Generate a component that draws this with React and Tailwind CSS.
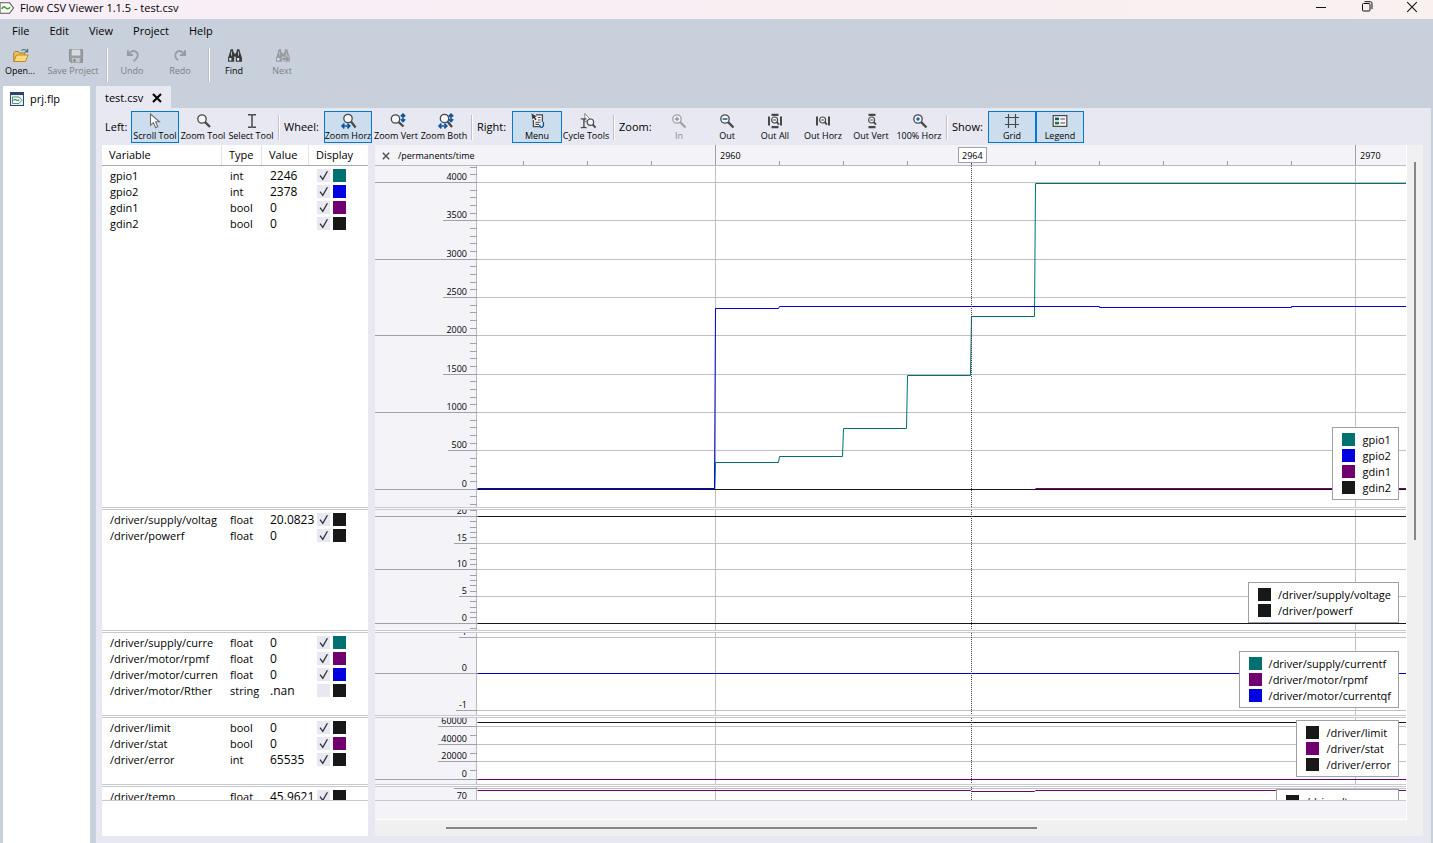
import React from "react";

const TEAL = "#007070";
const BLUE = "#0000e0";
const PURPLE = "#700070";
const BLACK = "#181818";

const PANES = [
  {
    name: "gpio",
    size: "h-[341px]",
    height: 341,
    rows: [
      ["gpio1", "int", "2246", true, TEAL],
      ["gpio2", "int", "2378", true, BLUE],
      ["gdin1", "bool", "0", true, PURPLE],
      ["gdin2", "bool", "0", true, BLACK],
    ],
    legend: [["gpio1", TEAL], ["gpio2", BLUE], ["gdin1", PURPLE], ["gdin2", BLACK]],
    axis: { zero: 323.3, unit: 0.07673, minor: 100, from: -200, to: 4200 },
    majors: [[4000, 0], [3500, 68], [3000, 0], [2500, 68], [2000, 0], [1500, 68], [1000, 0], [500, 73], [0, 0]],
    lines: [
      { color: TEAL, points: "102,323 339,323 340,296 403,296 404,290 467,290 468,262 531,262 532,209 595,209 596,150 659,150 660,17 4000,17" },
      { color: BLUE, points: "102,322 339,322 340,142 403,142 404,140 724,140 724,141 916,141 916,140 4000,140" },
      { color: PURPLE, points: "660,322 4000,322" },
      { color: BLACK, points: "102,323 4000,323" },
    ],
  },
  {
    name: "supply voltage",
    size: "h-[120px]",
    height: 120,
    rows: [
      ["/driver/supply/voltag", "float", "20.0823", true, BLACK],
      ["/driver/powerf", "float", "0", true, BLACK],
    ],
    legend: [["/driver/supply/voltage", BLACK], ["/driver/powerf", BLACK]],
    axis: { zero: 113.3, unit: 5.35, minor: 1, from: -1, to: 21 },
    majors: [[20, 0], [15, 79], [10, 0], [5, 84], [0, 0]],
    lines: [
      { color: BLACK, points: "102,6 4000,6" },
      { color: BLACK, points: "102,113 4000,113" },
    ],
  },
  {
    name: "motor",
    size: "h-[82px]",
    height: 82,
    rows: [
      ["/driver/supply/curre", "float", "0", true, TEAL],
      ["/driver/motor/rpmf", "float", "0", true, PURPLE],
      ["/driver/motor/curren", "float", "0", true, BLUE],
      ["/driver/motor/Rther", "string", ".nan", false, BLACK],
    ],
    legend: [["/driver/supply/currentf", TEAL], ["/driver/motor/rpmf", PURPLE], ["/driver/motor/currentqf", BLUE]],
    axis: { zero: 40.8, unit: 36.6, minor: 1, from: 0, to: -1 },
    majors: [[1, 84], [0, 0], [-1, 81]],
    lines: [{ color: "#0000c8", points: "102,40 4000,40" }],
  },
  {
    name: "limits",
    size: "h-[66px]",
    height: 66,
    rows: [
      ["/driver/limit", "bool", "0", true, BLACK],
      ["/driver/stat", "bool", "0", true, PURPLE],
      ["/driver/error", "int", "65535", true, BLACK],
    ],
    legend: [["/driver/limit", BLACK], ["/driver/stat", PURPLE], ["/driver/error", BLACK]],
    axis: { zero: 61.5, unit: 0.000882, minor: 10000, from: 0, to: 70000 },
    majors: [[60000, 63], [40000, 63], [20000, 63], [0, 0]],
    lines: [
      { color: BLACK, points: "102,4 4000,4" },
      { color: PURPLE, points: "102,61 4000,61" },
    ],
  },
  {
    name: "temperature",
    size: "h-[13px]",
    height: 13,
    rows: [["/driver/temp", "float", "45.9621", true, BLACK]],
    legend: [["/driver/temp", BLACK]],
    axis: { zero: 14, unit: 13, minor: 1, from: 0, to: -1 },
    majors: [[1, 79]],
    extraLabel: "70",
    lines: [{ color: PURPLE, points: "102,3 595,3 596,4 659,4 660,3 4000,3" }],
  },
];

function Divider() {
  return <div className="h-[3px] shrink-0 border-y border-[#c8c8d0] bg-white" />;
}

/* ---------- icons ---------- */

function Icon({ children }) {
  return (
    <svg width="16" height="16" viewBox="0 0 16 16" fill="none" stroke="#484848" strokeWidth="1.4" className="shrink-0 overflow-visible">
      {children}
    </svg>
  );
}

const Logo = ({ size = 14 }) => (
  <svg width={size} height={size} viewBox="0 0 14 14" fill="none" className="shrink-0">
    <path d="M0 1.7H9.5L13.5 7L9.5 12.3H0Z" fill="#fff" stroke="#555" strokeWidth="1.1" />
    <path d="M1.8 8C2.8 5.4 4.2 5.4 5.6 6.8S8.6 8.4 10 6.2" stroke="#2fa81e" strokeWidth="1.5" />
  </svg>
);

const ProjectIcon = () => (
  <svg width="14" height="14" viewBox="0 0 14 14" fill="none" className="shrink-0">
    <rect x=".5" y=".5" width="13" height="13" fill="#e9f2f0" stroke="#2c4672" />
    <rect width="14" height="3" fill="#2c4672" />
    <path d="M2.5 5H9L12 8.2L9 11.5H2.5Z" fill="#fff" stroke="#4b7a86" strokeWidth=".9" />
    <path d="M3.4 8.6C4.4 7 5.4 7.2 6.4 8S8.4 9 9.4 7.6" stroke="#2fa81e" strokeWidth="1.2" />
  </svg>
);

const OpenIcon = () => (
  <Icon>
    <path d="M1.8 13.5V4.8L3 3.5H6.2L7.4 5H12.6V7" fill="#f0c45a" stroke="#a77b2a" strokeWidth="1" />
    <path d="M1.8 13.5L4.6 7H16.2L13.4 13.5Z" fill="#fbd878" stroke="#b98a30" strokeWidth="1" />
    <path d="M9.5 2.5C11.5 .8 13.8 1.2 15 3.2M15.6 .8V3.9H12.6" stroke="#4a6e8c" strokeWidth="1.1" />
  </Icon>
);

const SaveIcon = () => (
  <Icon>
    <g transform="translate(3 0)">
      <path d="M1.5 1.5H14.5V14.5H3L1.5 13Z" fill="#9a9da1" stroke="#8c8f94" strokeWidth="1" />
      <rect x="3.8" y="1.5" width="8.4" height="6" fill="#d6dade" stroke="none" />
      <rect x="4.2" y="10" width="7.6" height="4.5" fill="#c3c7cb" stroke="none" />
      <rect x="5.5" y="11" width="2" height="3" fill="#83868a" stroke="none" />
    </g>
  </Icon>
);

const UndoIcon = () => (
  <Icon>
    <g transform="translate(1 0)">
      <path d="M3 2.2V7H8" stroke="#999ca0" strokeWidth="2" />
      <path d="M3.4 6.6C6 3 9 2.4 11.3 4C14 6.2 13 10 8.6 13.2" stroke="#999ca0" strokeWidth="1.8" />
    </g>
  </Icon>
);

const RedoIcon = () => (
  <Icon>
    <path d="M13 2.2V7H8" stroke="#999ca0" strokeWidth="2" />
    <path d="M12.6 6.6C10 3 7 2.4 4.7 4C2 6.2 3 10 6 12.2" stroke="#999ca0" strokeWidth="1.8" />
  </Icon>
);

const Binoculars = ({ color }) => (
  <g fill={color} stroke="none">
    <path d="M4.6 1.2H7.2V3.2L8.2 5V13.8H2V10L3.8 4.6Z" />
    <path d="M13.4 1.2H10.8V3.2L9.8 5V13.8H16V10L14.2 4.6Z" />
    <rect x="7.8" y="5.6" width="2.4" height="3" />
    <rect x="3.2" y="10" width="2.2" height="2.6" fill="#e2e6ea" />
    <rect x="11" y="10" width="2.2" height="2.6" fill="#e2e6ea" />
    <rect x="5" y="3.6" width="1" height="4" fill="#b5babf" />
    <rect x="12" y="3.6" width="1" height="4" fill="#b5babf" />
  </g>
);

const FindIcon = () => (
  <Icon>
    <Binoculars color="#3c3c3c" />
  </Icon>
);

const NextIcon = () => (
  <Icon>
    <Binoculars color="#989b9f" />
    <path d="M8 9.4H12V6.8L16.6 11L12 15.2V12.6H8Z" fill="#96999d" stroke="#c8d1db" strokeWidth=".7" />
  </Icon>
);

const Lens = ({ cx = 6, cy = 6, r = 4.2, to = 14, color = "#484848" }) => (
  <g stroke={color}>
    <circle cx={cx} cy={cy} r={r} fill="#f4f6f8" strokeWidth="1.3" />
    <path d={`M${cx + r * 0.75} ${cy + r * 0.75}L${to} ${to}`} strokeWidth="2.3" />
  </g>
);

const PointerIcon = () => (
  <Icon>
    <path d="M3.5 1V12.2L6.4 9.6L8.6 14.8L10.8 13.8L8.6 8.8H12.4Z" fill="#fff" stroke="#6e6e6e" strokeWidth="1.1" />
  </Icon>
);
const ZoomIcon = () => (
  <Icon>
    <g transform="translate(1 0)">
      <Lens />
    </g>
  </Icon>
);
const TextIcon = () => (
  <Icon>
    <g transform="translate(1 0)">
      <path d="M4 1.7H7L8 2.6L9 1.7H12M8 2.4V13.6M4 14.3H7L8 13.4L9 14.3H12" strokeWidth="1.5" />
    </g>
  </Icon>
);
const HorzArrow = () => (
  <path d="M1 13H8.6M3.4 10.6L1 13L3.4 15.4M6.4 10.6L8.8 13L6.4 15.4" stroke="#0d559e" strokeWidth="1.6" />
);
const VertArrow = () => (
  <path d="M13 1.2V8.2M10.8 3.4L13 1.1L15.2 3.4M10.8 6.2L13 8.5L15.2 6.2" stroke="#0d559e" strokeWidth="1.6" />
);
const ZoomHorzIcon = () => (
  <Icon>
    <g transform="translate(1 0)">
      <Lens cx={7} cy={5.5} to={14.5} />
      <HorzArrow />
    </g>
  </Icon>
);
const ZoomVertIcon = () => (
  <Icon>
    <g transform="translate(2 0)">
      <Lens cx={5.5} cy={6} to={13.5} />
      <VertArrow />
    </g>
  </Icon>
);
const ZoomBothIcon = () => (
  <Icon>
    <g transform="translate(2 0)">
      <Lens cx={6.5} cy={5.5} to={14} />
      <HorzArrow />
      <VertArrow />
    </g>
  </Icon>
);
const MenuIcon = () => (
  <Icon>
    <g transform="translate(1 0)">
      <path d="M3.4 1.8H12.4V13.6H3.4Z" fill="#f6f7f9" stroke="none" />
      <path d="M6 1.8H12.4V9M3.4 7V13.6H9.5" strokeWidth="1.3" />
      <path d="M1.5 .5L7 3.4L4.9 4L6.6 6.4L5.2 7.2L3.7 4.9L2.4 6.4Z" fill="#383838" stroke="none" />
      <path d="M8 4.5H10.6M8 7H10.6M5.4 9.3H10.6M5.4 11.4H9" strokeWidth="1.1" />
      <path d="M9.8 11.8V13.4L11 14.4H12L13.4 13V9" stroke="#0d559e" strokeWidth="1.4" />
    </g>
  </Icon>
);
const CycleIcon = () => (
  <Icon>
    <g transform="translate(2 0)">
      <path d="M4.8 .5V9L7 7.6H11.2Z" fill="#fff" stroke="#777" strokeWidth=".9" />
      <path d="M.8 5.8H3L4 6.6L5 5.8H6.6M3.9 6.4V14M.8 14.6H3L4 13.8L5 14.6H6.6" strokeWidth="1.3" />
      <circle cx="10.4" cy="9.2" r="3.2" fill="#f4f6f8" strokeWidth="1.2" />
      <path d="M12.8 11.6L15.6 14.6" strokeWidth="2" />
    </g>
  </Icon>
);
const ZoomInIcon = () => (
  <Icon>
    <Lens color="#a2a2a6" to={14.5} />
    <path d="M3.8 6H8.2M6 3.8V8.2" stroke="#96969a" />
  </Icon>
);
const ZoomOutIcon = () => (
  <Icon>
    <Lens to={14.5} />
    <path d="M3.6 6H8.4" stroke="#0d559e" strokeWidth="1.5" />
  </Icon>
);
const SmallLens = () => (
  <g>
    <circle cx="7.6" cy="7" r="3" fill="#f4f6f8" strokeWidth="1.2" />
    <path d="M6.3 7H8.9" strokeWidth="1.1" />
    <path d="M9.8 9.2L12 11.6" strokeWidth="1.8" />
  </g>
);
const HBars = () => <path d="M2 3.5V12.5M14 3.5V12.5" strokeWidth="2" />;
const VBars = () => <path d="M4.5 1.8H11.5M4.5 14.2H11.5" strokeWidth="2.2" />;
const OutAllIcon = () => (
  <Icon>
    <HBars />
    <VBars />
    <SmallLens />
  </Icon>
);
const OutHorzIcon = () => (
  <Icon>
    <HBars />
    <SmallLens />
  </Icon>
);
const OutVertIcon = () => (
  <Icon>
    <g transform="translate(1 0)">
      <VBars />
      <SmallLens />
    </g>
  </Icon>
);
const HundredIcon = () => (
  <Icon>
    <g transform="translate(1 0)">
      <Lens to={14.5} />
      <circle cx="6" cy="6" r="1.7" fill="#0d66b8" stroke="none" />
    </g>
  </Icon>
);
const GridIcon = () => (
  <Icon>
    <path d="M4.5 1V15M11.5 1V15M1 4.5H15M1 11.5H15" strokeWidth="1.2" />
  </Icon>
);
const LegendIcon = () => (
  <Icon>
    <rect x="1.2" y="2.6" width="13.6" height="10.8" fill="#f8f8f8" strokeWidth="1.2" />
    <rect x="3" y="4.6" width="4" height="2.6" fill="#174f80" stroke="none" />
    <rect x="3" y="8.8" width="4" height="2.6" fill="#197a30" stroke="none" />
    <path d="M8.4 6H13M8.4 10H13" strokeWidth="1.2" />
  </Icon>
);

const CloseMark = ({ size, width, color }) => (
  <svg width={size} height={size} viewBox="0 0 10 10" stroke={color} strokeWidth={width} fill="none">
    <path d="M1 1L9 9M9 1L1 9" />
  </svg>
);

/* ---------- bars ---------- */

function TitleBar() {
  return (
    <header className="flex h-[19px] shrink-0 items-start justify-between bg-linear-to-r from-[#f8eef7] to-[#f9f0f0]">
      <div className="flex items-center gap-[6px] leading-[15px]">
        <Logo />
        <h1 className="text-[11px]">Flow CSV Viewer 1.1.5 - test.csv</h1>
      </div>
      <div className="flex h-[13px]">
        <button aria-label="Minimize" className="flex w-[46px] items-center justify-center">
          <svg width="10" height="10" stroke="#111" fill="none"><path d="M0 5.5H10" /></svg>
        </button>
        <button aria-label="Restore" className="flex w-[46px] items-center justify-center">
          <svg width="11" height="11" stroke="#111" fill="none">
            <rect x=".5" y="2.5" width="7.5" height="7.5" rx="1" />
            <path d="M2.5 .7H8.3Q10 .7 10 2.4V8" />
          </svg>
        </button>
        <button aria-label="Close" className="flex w-[43px] items-center justify-center">
          <CloseMark size={12} width={0.9} color="#111" />
        </button>
      </div>
    </header>
  );
}

function MenuBar() {
  return (
    <nav className="flex h-[24px] shrink-0 items-center gap-[20px] px-3 text-[11px]">
      {["File", "Edit", "View", "Project", "Help"].map((m) => (
        <button key={m}>{m}</button>
      ))}
    </nav>
  );
}

function MainButton({ icon, label, width, disabled }) {
  return (
    <button disabled={disabled} className={`flex flex-col items-center ${width} ${disabled ? "text-[#7c8085]" : "text-black"}`}>
      {icon}
      <span className="text-[9px] leading-[14px] whitespace-nowrap">{label}</span>
    </button>
  );
}

function MainToolbar() {
  return (
    <div role="toolbar" className="flex h-[43px] shrink-0 items-start pt-[5px]">
      <MainButton icon={<OpenIcon />} label="Open..." width="w-[40px]" />
      <MainButton icon={<SaveIcon />} label="Save Project" width="w-[66px]" disabled />
      <span className="h-[34px] w-[2px] border-r border-white bg-[#b9c1ca]" />
      <MainButton icon={<UndoIcon />} label="Undo" width="w-[48px]" disabled />
      <MainButton icon={<RedoIcon />} label="Redo" width="w-[48px]" disabled />
      <span className="ml-[4px] h-[34px] w-[2px] border-r border-white bg-[#b9c1ca]" />
      <MainButton icon={<FindIcon />} label="Find" width="w-[48px]" />
      <MainButton icon={<NextIcon />} label="Next" width="w-[48px]" disabled />
    </div>
  );
}

function Tool({ icon, label, active, disabled, width = "w-[48px]" }) {
  return (
    <button
      disabled={disabled}
      className={`flex h-[32px] flex-col items-center border pt-px ${width} ${
        active ? "border-[#0078d7] bg-[#ccdeee]" : "border-transparent"
      } ${disabled ? "text-[#8a8a90]" : "text-black"}`}
    >
      {icon}
      <span className="text-[9px] leading-[14px] whitespace-nowrap">{label}</span>
    </button>
  );
}

function ToolGroup({ title, titleWidth, children }) {
  return (
    <div className="flex items-center">
      <span className={`text-[11px] whitespace-nowrap ${titleWidth}`}>{title}</span>
      {children}
    </div>
  );
}

const ToolSeparator = () => (
  <span className="mr-[4px] ml-[3px] h-[25px] w-[2px] self-center border-r border-white bg-[#c0c0c6]" />
);

function ChartToolbar() {
  return (
    <div role="toolbar" className="flex h-[37px] shrink-0 items-start pt-[3px] pb-[2px] pl-[9px]">
      <ToolGroup title="Left:" titleWidth="w-[26px]">
        <Tool icon={<PointerIcon />} label="Scroll Tool" active />
        <Tool icon={<ZoomIcon />} label="Zoom Tool" />
        <Tool icon={<TextIcon />} label="Select Tool" />
      </ToolGroup>
      <ToolSeparator />
      <ToolGroup title="Wheel:" titleWidth="w-[40px]">
        <Tool icon={<ZoomHorzIcon />} label="Zoom Horz" active />
        <Tool icon={<ZoomVertIcon />} label="Zoom Vert" />
        <Tool icon={<ZoomBothIcon />} label="Zoom Both" />
      </ToolGroup>
      <ToolSeparator />
      <ToolGroup title="Right:" titleWidth="w-[35px]">
        <Tool icon={<MenuIcon />} label="Menu" active width="w-[50px]" />
        <Tool icon={<CycleIcon />} label="Cycle Tools" />
      </ToolGroup>
      <ToolSeparator />
      <ToolGroup title="Zoom:" titleWidth="w-[36px]">
        <Tool icon={<ZoomInIcon />} label="In" disabled />
        <Tool icon={<ZoomOutIcon />} label="Out" />
        <Tool icon={<OutAllIcon />} label="Out All" />
        <Tool icon={<OutHorzIcon />} label="Out Horz" />
        <Tool icon={<OutVertIcon />} label="Out Vert" />
        <Tool icon={<HundredIcon />} label="100% Horz" />
      </ToolGroup>
      <ToolSeparator />
      <ToolGroup title="Show:" titleWidth="w-[36px]">
        <Tool icon={<GridIcon />} label="Grid" active />
        <Tool icon={<LegendIcon />} label="Legend" active />
      </ToolGroup>
    </div>
  );
}

/* ---------- variable list ---------- */

const Columns = () => (
  <colgroup>
    <col className="w-[120px]" />
    <col className="w-[40px]" />
    <col className="w-[47px]" />
    <col className="w-[59px]" />
  </colgroup>
);

function VariableRow({ row }) {
  const [name, type, value, shown, color] = row;
  return (
    <tr className="h-[16px] leading-[16px]">
      <td className="p-0 pl-2 whitespace-nowrap">{name}</td>
      <td className="p-0 pl-2 whitespace-nowrap">{type}</td>
      <td className="p-0 pl-2 text-[12px] leading-[16px] whitespace-nowrap">{value}</td>
      <td className="p-0 pl-2 align-top">
        <div className="flex items-center gap-[3px] pt-px">
          <label className="grid size-[13px]">
            <input
              type="checkbox"
              aria-label={`Display ${name}`}
              defaultChecked={shown}
              className="peer col-start-1 row-start-1 size-[13px] appearance-none bg-[#e7e8f1]"
            />
            <svg
              viewBox="0 0 13 13"
              fill="none"
              stroke="#2f3337"
              strokeWidth="1.3"
              className="pointer-events-none invisible col-start-1 row-start-1 size-[13px] peer-checked:visible"
            >
              <path d="M3 6.6L5.8 10.4L10.4 2.2" />
            </svg>
          </label>
          <span className="size-[13px]" style={{ backgroundColor: color }} />
        </div>
      </td>
    </tr>
  );
}

function VariableList() {
  return (
    <section className="flex w-[266px] shrink-0 flex-col bg-white text-[11px]">
      <div className="h-[21px] shrink-0 border-b border-[#a8a8b0]">
        <table className="h-[20px] w-full table-fixed border-separate border-spacing-0">
          <Columns />
          <thead>
            <tr className="text-left">
              <th className="border-r border-[#e2e2ea] p-0 pl-[7px] font-normal">Variable</th>
              <th className="border-r border-[#e2e2ea] p-0 pl-[7px] font-normal">Type</th>
              <th className="border-r border-[#e2e2ea] p-0 pl-[7px] font-normal">Value</th>
              <th className="p-0 pl-[7px] font-normal">Display</th>
            </tr>
          </thead>
        </table>
      </div>
      {PANES.map((pane, i) => (
        <React.Fragment key={pane.name}>
          {i > 0 && <Divider />}
          <div className={`shrink-0 overflow-hidden pt-[2px] ${pane.size}`}>
            <table className="w-full table-fixed border-collapse" aria-label={pane.name}>
              <Columns />
              <tbody>
                {pane.rows.map((row) => (
                  <VariableRow key={row[0]} row={row} />
                ))}
              </tbody>
            </table>
          </div>
        </React.Fragment>
      ))}
      <div className="h-px bg-[#c8c8d0]" />
    </section>
  );
}

/* ---------- chart ---------- */

const X_FIRST = 340;
const X_CURSOR = 596;
const X_UNIT = 64;

function TimeHeader() {
  const ticks = [];
  for (let n = -3; n < 40; n++) if (n % 10 !== 0 && n !== 4) ticks.push(X_FIRST + n * X_UNIT);
  return (
    <div className="relative h-[21px] shrink-0 overflow-hidden border-b border-[#b8b8be] bg-[#f3f3f8] text-[9px]">
      <svg width="100%" height="20" className="block">
        {ticks.map((x) => (
          <rect key={x} x={x} y="16" width="1" height="4" fill="#a0a0a8" />
        ))}
        {[0, 1, 2].map((n) => (
          <g key={n}>
            <rect x={X_FIRST + n * 640} y="0" width="1" height="20" fill="#a0a0a8" />
            <text x={X_FIRST + 5 + n * 640} y="14">{2960 + n * 10}</text>
          </g>
        ))}
        <rect x={X_CURSOR} y="17" width="1" height="4" fill="#555" />
        <rect x="583.5" y="2.5" width="28" height="15" fill="#fff" stroke="#a0a0a8" />
        <text x="587" y="14">2964</text>
        <text x="23" y="14">/permanents/time</text>
      </svg>
      <button aria-label="Close chart" className="absolute top-[7px] left-[7px]">
        <CloseMark size={8} width={1.9} color="#555" />
      </button>
    </div>
  );
}

function Plot({ pane }) {
  const { zero, unit, minor, from, to } = pane.axis;
  const y = (v) => Math.floor(zero - v * unit);
  const ticks = [];
  for (let v = from; v <= to; v += minor) ticks.push(y(v));
  return (
    <div className={`relative shrink-0 overflow-hidden bg-white ${pane.size}`}>
      <svg width="100%" height={pane.height} className="block text-[9px]">
        <rect width="101" height={pane.height} fill="#f3f3f8" />
        <rect x="101" width="1" height={pane.height} fill="#b8b8be" />
        {[X_FIRST, X_FIRST + 640, X_FIRST + 1280].map((x) => (
          <rect key={x} x={x} width="1" height={pane.height} fill="#c0c0c2" />
        ))}
        {ticks.map((t) => (
          <rect key={t} x="95" y={t} width="7" height="1" fill="#a0a0a8" />
        ))}
        {pane.majors.map(([v, start]) => (
          <g key={v}>
            <rect x="102" y={y(v)} width="100%" height="1" fill="#c0c0c2" />
            <rect x={start} y={y(v)} width={102 - start} height="1" fill="#a0a0a8" />
            {!pane.extraLabel && (
              <text x="92" y={y(v) - 2} textAnchor="end">{v}</text>
            )}
          </g>
        ))}
        {pane.extraLabel && <text x="92" y="12" textAnchor="end">{pane.extraLabel}</text>}
        <g transform="translate(.5 .5)" fill="none" strokeWidth="1">
          {pane.lines.map((line, i) => (
            <polyline key={i} points={line.points} stroke={line.color} />
          ))}
          <path d={`M${X_CURSOR} -0.5V400`} stroke="#444" strokeDasharray="1 1" />
        </g>
      </svg>
      <ul
        className={`absolute right-[7px] border border-[#a0a0a8] bg-white pt-1 pr-[7px] pb-[3px] pl-[9px] text-[11px] leading-[16px] ${
          pane.extraLabel ? "top-[2px] min-w-[123px]" : "bottom-[7px]"
        }`}
      >
        {pane.legend.map(([name, color]) => (
          <li key={name} className="flex items-start gap-[7px]">
            <span className="mt-px size-[13px]" style={{ backgroundColor: color }} />
            {name}
          </li>
        ))}
      </ul>
    </div>
  );
}

function ChartArea() {
  return (
    <section className="flex min-w-0 flex-1 flex-col bg-[#f0f0f0]">
      <div className="flex flex-1">
        <div className="flex min-w-0 flex-1 flex-col border-r border-b border-white bg-[#f3f3f8]">
          <TimeHeader />
          {PANES.map((pane, i) => (
            <React.Fragment key={pane.name}>
              {i > 0 && <Divider />}
              <Plot pane={pane} />
            </React.Fragment>
          ))}
          <div className="h-px bg-[#c8c8d0]" />
        </div>
        <div className="flex w-[16px] shrink-0 justify-center pt-[17px]">
          <div className="h-[378px] w-[2px] bg-[#868686]" />
        </div>
      </div>
      <div className="flex h-[16px] shrink-0 items-center pl-[71px]">
        <div className="h-[2px] w-[591px] bg-[#868686]" />
      </div>
    </section>
  );
}

export default function App() {
  return (
    <div className="flex min-h-screen flex-col bg-[#c8d1db] font-['Open_Sans',sans-serif] text-black">
      <TitleBar />
      <MenuBar />
      <MainToolbar />
      <div className="flex flex-1 gap-[6px] pr-[2px] pl-[3px]">
        <aside className="w-[87px] shrink-0 bg-white px-[7px] pt-[5px]">
          <a href="#project" className="flex items-center gap-[6px] text-[11px] leading-[15px]">
            <ProjectIcon />
            prj.flp
          </a>
        </aside>
        <main className="flex min-w-0 flex-1 flex-col">
          <div className="flex h-[22px] shrink-0 items-center gap-[9px] self-start bg-[#e7e8f1] px-[9px] pt-[2px] text-[11px]">
            <span>test.csv</span>
            <button aria-label="Close tab">
              <CloseMark size={10} width={2.1} color="#000" />
            </button>
          </div>
          <div className="flex flex-1 flex-col bg-[#e7e8f1]">
            <ChartToolbar />
            <div className="flex flex-1 gap-[7px] pr-[8px] pb-[7px] pl-[6px]">
              <VariableList />
              <ChartArea />
            </div>
          </div>
        </main>
      </div>
    </div>
  );
}
